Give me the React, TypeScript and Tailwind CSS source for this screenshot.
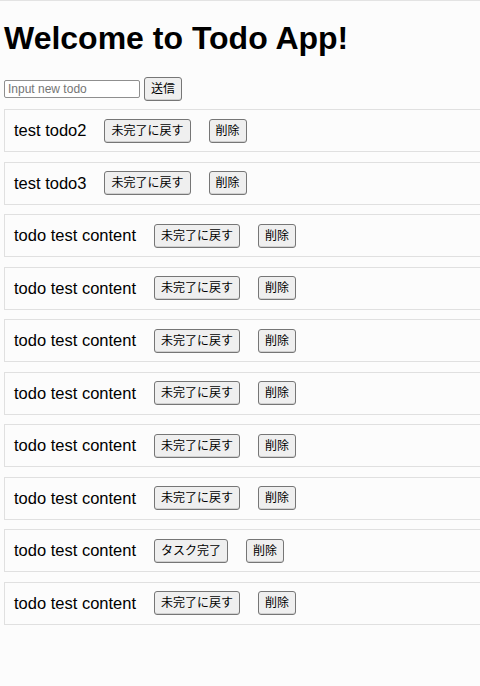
const todos = [
  { text: 'test todo2', done: true },
  { text: 'test todo3', done: true },
  { text: 'todo test content', done: true },
  { text: 'todo test content', done: true },
  { text: 'todo test content', done: true },
  { text: 'todo test content', done: true },
  { text: 'todo test content', done: true },
  { text: 'todo test content', done: true },
  { text: 'todo test content', done: false },
  { text: 'todo test content', done: true },
];

const font = "font-['Liberation_Sans','Noto_Sans_CJK_JP',sans-serif]";
const btn =
  'border border-[#767676] rounded-[3px] bg-[#efefef] text-[12px] text-black leading-none px-[6px] h-[24px] shadow-[inset_0_-1px_0_#d0d0d0]';

function App() {
  return (
    <div className={`${font} min-h-screen bg-[#fcfcfc] border-t border-[#e3e3e3] overflow-x-hidden text-black`}>
      <h1 className="text-[32px] font-bold leading-none px-1 pt-[21px]">Welcome to Todo App!</h1>

      {/* Input */}
      <div className="flex items-center gap-1 px-1 mt-[23px]">
        <input
          placeholder="Input new todo"
          className="w-[136px] h-[18px] border border-[#8f8f8f] rounded-[2px] bg-white text-[12px] px-[3px] placeholder:text-[#757575] outline-none"
        />
        <button className={`${btn} h-[23px] px-[6px] text-[12.5px]`}>送信</button>
      </div>

      {/* List */}
      <div className="mt-[8px] flex flex-col gap-[9.5px]">
        {todos.map((todo, i) => (
          <div
            key={i}
            className="ml-1 -mr-6 h-[43px] border border-[#e0e0e0] flex items-center pl-[9px] gap-[18px]"
          >
            <span className="text-[16.5px]">{todo.text}</span>
            <button className={btn}>{todo.done ? '未完了に戻す' : 'タスク完了'}</button>
            <button className={btn}>削除</button>
          </div>
        ))}
      </div>
    </div>
  );
}

export default App;
